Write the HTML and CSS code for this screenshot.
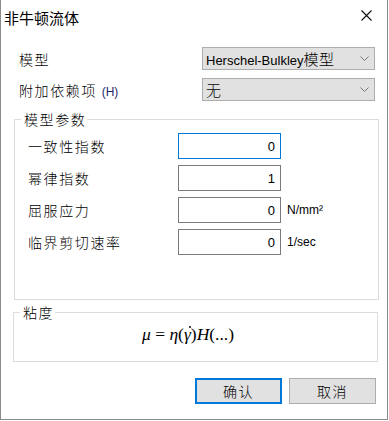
FILE: index.html
```html
<!DOCTYPE html>
<html lang="zh-CN">
<head>
  <meta charset="UTF-8">
  <title>非牛顿流体</title>
  <link rel="stylesheet" href="styles.css">
</head>
<body>
  <div class="window">
    <div class="titlebar">
      <span class="title">非牛顿流体</span>
      <svg class="close" width="11" height="11" viewBox="0 0 11 11">
        <path d="M0.5 0.5 L10.5 10.5 M10.5 0.5 L0.5 10.5" stroke="#111" stroke-width="1.1" fill="none"/>
      </svg>
    </div>

    <div class="content">
      <div class="field-row">
        <span class="label">模型</span>
        <div class="select">
          <span class="select-text"><span class="latin">Herschel-Bulkley</span>模型</span>
          <svg class="chevron" width="9" height="5" viewBox="0 0 9 5"><path d="M0.5 0.5 L4.5 4.5 L8.5 0.5" stroke="#777" fill="none"/></svg>
        </div>
      </div>
      <div class="field-row">
        <span class="label">附加依赖项 <span class="hint">(H)</span></span>
        <div class="select">
          <span class="select-text">无</span>
          <svg class="chevron" width="9" height="5" viewBox="0 0 9 5"><path d="M0.5 0.5 L4.5 4.5 L8.5 0.5" stroke="#777" fill="none"/></svg>
        </div>
      </div>

      <div class="group params">
        <span class="group-title">模型参数</span>
        <div class="param-list">
          <div class="param">
            <span class="param-label">一致性指数</span>
            <div class="num focused">0</div>
          </div>
          <div class="param">
            <span class="param-label">幂律指数</span>
            <div class="num">1</div>
          </div>
          <div class="param">
            <span class="param-label">屈服应力</span>
            <div class="num">0</div>
            <span class="unit">N/mm²</span>
          </div>
          <div class="param">
            <span class="param-label">临界剪切速率</span>
            <div class="num">0</div>
            <span class="unit">1/sec</span>
          </div>
        </div>
      </div>

      <div class="group viscosity">
        <span class="group-title">粘度</span>
        <div class="formula"><i>μ</i> = <i>η</i>(<i class="gdot">γ</i>)<i>H</i>(...)</div>
      </div>

      <div class="buttons">
        <button class="btn default">确认</button>
        <button class="btn">取消</button>
      </div>
    </div>
  </div>
</body>
</html>
```

FILE: styles.css
```css
body {
  margin: 0;
  padding: 0;
  background: #fff;
  font-family: "Liberation Sans", "Noto Sans CJK SC", sans-serif;
  color: #000;
}

.window {
  width: 388px;
  height: 420px;
  box-sizing: border-box;
  border: 1px solid #8a8a8a;
  border-top: none;
  background: #fff;
}

.titlebar {
  height: 33px;
  display: flex;
  align-items: center;
  justify-content: space-between;
  padding: 0 15px 0 3px;
}

.title {
  font-family: "Noto Sans CJK SC", sans-serif;
  font-size: 15px;
  margin-top: 1px;
}

.close {
  display: block;
  margin-top: -2px;
}

.content {
  padding: 14px 0 0 18px;
}

.field-row {
  display: flex;
  align-items: center;
  height: 23px;
  margin-bottom: 8px;
}

.label {
  width: 183px;
  font-family: "Noto Sans CJK SC", sans-serif;
  font-size: 14px;
  font-weight: 300;
  letter-spacing: 1.6px;
}

.hint {
  font-family: "Liberation Sans", sans-serif;
  font-size: 12px;
  font-weight: normal;
  letter-spacing: 0;
  color: #1f1f6b;
}

.select {
  width: 173px;
  height: 23px;
  box-sizing: border-box;
  border: 1px solid #adadad;
  background: #e1e1e1;
  display: flex;
  align-items: center;
  justify-content: space-between;
  padding: 0 5px 0 3px;
}

.select-text {
  font-family: "Noto Sans CJK SC", sans-serif;
  font-size: 15px;
  font-weight: 300;
  letter-spacing: 0.5px;
}

.latin {
  font-family: "Liberation Sans", sans-serif;
  font-size: 13px;
  font-weight: normal;
  letter-spacing: 0;
}

.group {
  border: 1px solid #dcdcdc;
  margin-left: -5px;
  width: 365px;
  box-sizing: border-box;
}

.params {
  margin-top: 18px;
  height: 181px;
}

.group-title {
  display: block;
  width: fit-content;
  background: #fff;
  font-family: "Noto Sans CJK SC", sans-serif;
  font-size: 14px;
  font-weight: 300;
  letter-spacing: 1.6px;
  line-height: 14px;
  padding: 0 1px 0 3px;
  margin: -8px 0 0 6px;
}

.param-list {
  padding: 7px 0 0 13px;
}

.param {
  display: flex;
  align-items: center;
  height: 26px;
  margin-bottom: 6px;
}

.param-label {
  width: 150px;
  font-family: "Noto Sans CJK SC", sans-serif;
  font-size: 14px;
  font-weight: 300;
  letter-spacing: 1.6px;
}

.num {
  width: 103px;
  height: 26px;
  box-sizing: border-box;
  border: 1px solid #7a7a7a;
  font-size: 13px;
  text-align: right;
  padding: 5px 5px 0 0;
  color: #000;
}

.num.focused {
  border-color: #0078d7;
}

.unit {
  font-size: 12px;
  margin-left: 6px;
  color: #000;
}

.viscosity {
  margin-top: 12px;
  margin-left: -6px;
  height: 50px;
}

.formula {
  text-align: center;
  font-family: "Liberation Serif", serif;
  font-size: 17.5px;
  line-height: 20px;
  margin: 5px 15px 0 0;
}

.gdot {
  position: relative;
}

.gdot::after {
  content: "";
  position: absolute;
  width: 2px;
  height: 2px;
  border-radius: 1px;
  background: #000;
  left: 5px;
  top: 2px;
}

.buttons {
  display: flex;
  gap: 7px;
  margin: 16px 0 0 176px;
}

.btn {
  width: 87px;
  height: 26px;
  box-sizing: border-box;
  border: 1px solid #adadad;
  background: #e1e1e1;
  font-family: "Noto Sans CJK SC", sans-serif;
  font-size: 14px;
  font-weight: 300;
  letter-spacing: 1.6px;
  padding: 0;
  color: #000;
}

.btn.default {
  border: 2px solid #0078d7;
}
```
